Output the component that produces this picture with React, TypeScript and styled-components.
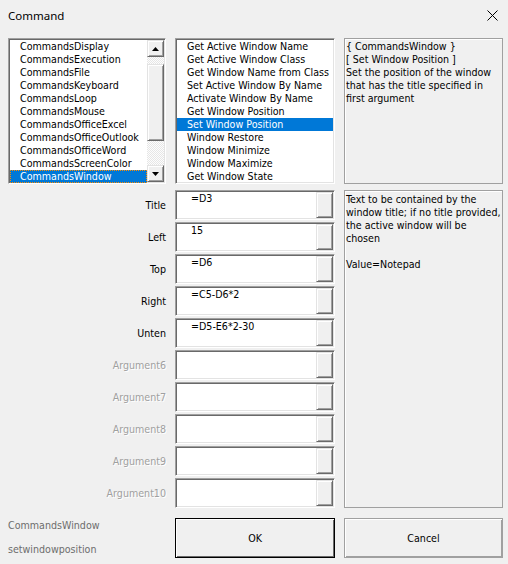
import React from "react";
import styled, { createGlobalStyle } from "styled-components";

const Global = createGlobalStyle`
  html, body { margin: 0; padding: 0; background: #f0f0f0; }
  body {
    font-family: "DejaVu Sans Condensed", "Liberation Sans", sans-serif;
    font-size: 10.6px;
    color: #000;
  }
  * { box-sizing: border-box; }
`;

const Window = styled.div`
  width: 508px;
  height: 564px;
  background: #f0f0f0;
  display: flex;
  flex-direction: column;
  overflow: hidden;
`;

const TitleBar = styled.div`
  height: 30px;
  display: flex;
  align-items: center;
  justify-content: space-between;
  padding: 0 10px 0 8px;
  font-family: "Noto Sans", "Open Sans", sans-serif;
  font-size: 11.5px;
  color: #000;
`;

const Section = styled.div<{ $top: number }>`
  display: grid;
  grid-template-columns: 158px 160px 159px;
  column-gap: 9px;
  padding-left: 8px;
  margin-top: ${(p) => p.$top}px;
`;

const ListBox = styled.div`
  height: 146px;
  display: flex;
  background: #fff;
  border: 1px solid;
  border-color: #a0a0a0 #fff #fff #a0a0a0;
  box-shadow: inset 1px 1px 0 #696969, inset -1px -1px 0 #e3e3e3;
  padding: 1px 1px 0 1px;
`;

const Items = styled.div`
  flex: 1;
  display: flex;
  flex-direction: column;
  overflow: hidden;
`;

const Item = styled.div<{ $sel?: boolean; $focus?: boolean }>`
  height: 13px;
  line-height: 13px;
  flex-shrink: 0;
  padding-left: 10px;
  white-space: nowrap;
  background: ${(p) => (p.$sel ? "#0078d7" : "transparent")};
  color: ${(p) => (p.$sel ? "#fff" : "#000")};
  outline: ${(p) => (p.$focus ? "1px dotted #ff8c00" : "none")};
  outline-offset: -1px;
`;

const ScrollBar = styled.div`
  width: 17px;
  margin-bottom: 1px;
  display: flex;
  flex-direction: column;
  background: repeating-conic-gradient(#e6e6e6 0 25%, #fdfdfd 0 50%) 0 0 / 2px 2px;
`;

const Raised = styled.div`
  background: #f0f0f0;
  border: 1px solid;
  border-color: #e3e3e3 #696969 #696969 #e3e3e3;
  box-shadow: inset 1px 1px 0 #fff, inset -1px -1px 0 #a0a0a0;
`;

const ArrowBtn = styled(Raised)`
  height: 17px;
  flex-shrink: 0;
  display: flex;
  align-items: center;
  justify-content: center;
`;

const Track = styled.div<{ $h?: number }>`
  ${(p) => (p.$h ? `height: ${p.$h}px; flex-shrink: 0;` : "flex: 1;")}
`;

const Thumb = styled(Raised)`
  height: 77px;
  flex-shrink: 0;
`;

const DescBox = styled.div`
  height: 146px;
  border: 1px solid #a0a0a0;
  box-shadow: inset 1px 1px 0 #fff;
  padding: 1px 0 0 1px;
  line-height: 13px;
  background: #f0f0f0;
`;

const ArgGrid = styled(Section)`
  grid-template-rows: repeat(10, 30px);
  row-gap: 2px;
`;

const Label = styled.div<{ $disabled?: boolean }>`
  grid-column: 1;
  display: flex;
  align-items: center;
  justify-content: flex-end;
  color: ${(p) => (p.$disabled ? "#a0a0a0" : "#000")};
  text-shadow: ${(p) => (p.$disabled ? "1px 1px 0 #fff" : "none")};
`;

const Field = styled.div`
  grid-column: 2;
  display: flex;
  background: #fff;
  border: 1px solid;
  border-color: #a0a0a0 #fff #fff #a0a0a0;
  box-shadow: inset 1px 1px 0 #696969, inset -1px -1px 0 #e3e3e3;
  padding: 1px;
`;

const FieldText = styled.div`
  flex: 1;
  padding: 0 0 0 14px;
  line-height: 13px;
`;

const SpinBtn = styled(Raised)`
  width: 17px;
`;

const HelpBox = styled.div`
  grid-column: 3;
  grid-row: 1 / span 10;
  border: 1px solid #a0a0a0;
  box-shadow: inset 1px 1px 0 #fff;
  padding: 2px 0 0 1px;
  line-height: 13px;
`;

const Footer = styled(Section)`
  grid-template-rows: 40px;
`;

const Info = styled.div`
  display: flex;
  flex-direction: column;
  gap: 11px;
  padding-top: 1px;
  color: #6d6d6d;
  line-height: 13px;
`;

const Button = styled.button<{ $default?: boolean }>`
  font: inherit;
  color: #000;
  height: 40px;
  background: #f0f0f0;
  border: 1px solid ${(p) => (p.$default ? "#000" : "#a0a0a0")};
  box-shadow: ${(p) =>
    p.$default
      ? "inset 1px 1px 0 #fff, inset -1px -1px 0 #696969"
      : "inset 1px 1px 0 #fff, inset -1px -1px 0 #a0a0a0"};
  padding: 0;
`;

const Tri = ({ up }: { up?: boolean }) => (
  <svg width="7" height="4" viewBox="0 0 7 4">
    <polygon points={up ? "0,4 7,4 3.5,0" : "0,0 7,0 3.5,4"} fill="#000" />
  </svg>
);

const categories = [
  "CommandsDisplay",
  "CommandsExecution",
  "CommandsFile",
  "CommandsKeyboard",
  "CommandsLoop",
  "CommandsMouse",
  "CommandsOfficeExcel",
  "CommandsOfficeOutlook",
  "CommandsOfficeWord",
  "CommandsScreenColor",
  "CommandsWindow",
];

const commands = [
  "Get Active Window Name",
  "Get Active Window Class",
  "Get Window Name from Class",
  "Set Active Window By Name",
  "Activate Window By Name",
  "Get Window Position",
  "Set Window Position",
  "Window Restore",
  "Window Minimize",
  "Window Maximize",
  "Get Window State",
];

const args: { label: string; value: string; disabled?: boolean }[] = [
  { label: "Title", value: "=D3" },
  { label: "Left", value: "15" },
  { label: "Top", value: "=D6" },
  { label: "Right", value: "=C5-D6*2" },
  { label: "Unten", value: "=D5-E6*2-30" },
  { label: "Argument6", value: "", disabled: true },
  { label: "Argument7", value: "", disabled: true },
  { label: "Argument8", value: "", disabled: true },
  { label: "Argument9", value: "", disabled: true },
  { label: "Argument10", value: "", disabled: true },
];

export default function App() {
  return (
    <>
      <Global />
      <Window>
        <TitleBar>
          <span>Command</span>
          <svg width="11" height="11" viewBox="0 0 11 11">
            <path d="M0.5 0.5 L10.5 10.5 M10.5 0.5 L0.5 10.5" stroke="#000" strokeWidth="1" />
          </svg>
        </TitleBar>

        <Section $top={8}>
          <ListBox>
            <Items>
              {categories.map((c) => (
                <Item key={c} $sel={c === "CommandsWindow"} $focus={c === "CommandsWindow"}>
                  {c}
                </Item>
              ))}
            </Items>
            <ScrollBar>
              <ArrowBtn>
                <Tri up />
              </ArrowBtn>
              <Track $h={7} />
              <Thumb />
              <Track />
              <ArrowBtn>
                <Tri />
              </ArrowBtn>
            </ScrollBar>
          </ListBox>
          <ListBox>
            <Items>
              {commands.map((c) => (
                <Item key={c} $sel={c === "Set Window Position"}>
                  {c}
                </Item>
              ))}
            </Items>
          </ListBox>
          <DescBox>
            {"{ CommandsWindow }"}
            <br />
            [ Set Window Position ]
            <br />
            Set the position of the window that has the title specified in first argument
          </DescBox>
        </Section>

        <ArgGrid $top={6}>
          {args.map((a, i) => (
            <React.Fragment key={a.label}>
              <Label $disabled={a.disabled} style={{ gridRow: i + 1 }}>
                {a.label}
              </Label>
              <Field style={{ gridRow: i + 1 }}>
                <FieldText>{a.value}</FieldText>
                <SpinBtn />
              </Field>
            </React.Fragment>
          ))}
          <HelpBox>
            Text to be contained by the window title; if no title provided, the active window will be chosen
            <br />
            <br />
            Value=Notepad
          </HelpBox>
        </ArgGrid>

        <Footer $top={10}>
          <Info>
            <span>CommandsWindow</span>
            <span>setwindowposition</span>
          </Info>
          <Button $default>OK</Button>
          <Button>Cancel</Button>
        </Footer>
      </Window>
    </>
  );
}
